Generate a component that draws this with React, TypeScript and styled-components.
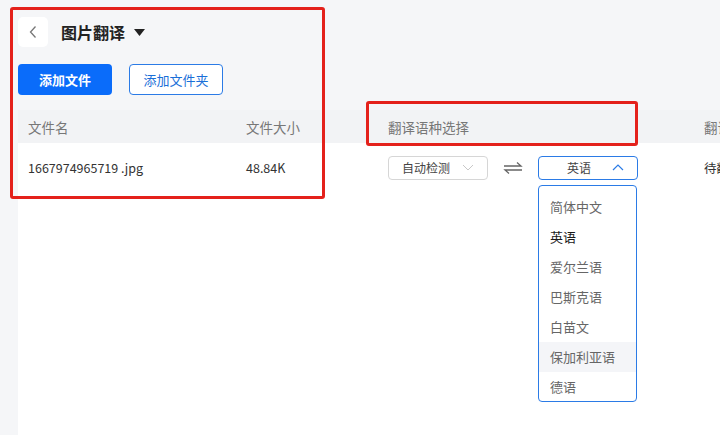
import React from 'react';
import styled, { createGlobalStyle } from 'styled-components';

const GlobalStyle = createGlobalStyle`
  html, body {
    margin: 0;
    padding: 0;
    background: #ffffff;
    font-family: "Noto Sans CJK SC", "Noto Sans", "Liberation Sans", sans-serif;
  }
`;

const languages = ['简体中文', '英语', '爱尔兰语', '巴斯克语', '白苗文', '保加利亚语', '德语'];

const App: React.FC = () => {
  return (
    <>
      <GlobalStyle />
      <Page>
        <LeftRail />
        <Main>
          <Top>
            <HeaderRow>
              <BackButton>
                <svg width="10" height="14" viewBox="0 0 10 14">
                  <path d="M7.5 1.5 L2.5 7 L7.5 12.5" fill="none" stroke="#777" strokeWidth="1.3" />
                </svg>
              </BackButton>
              <Title>图片翻译</Title>
              <Caret>
                <svg width="11" height="7" viewBox="0 0 11 7">
                  <path d="M0 0 H11 L5.5 7 Z" fill="#222" />
                </svg>
              </Caret>
            </HeaderRow>
            <Toolbar>
              <PrimaryButton>添加文件</PrimaryButton>
              <OutlineButton>添加文件夹</OutlineButton>
            </Toolbar>
          </Top>
          <Table>
            <HeadRow>
              <HeadCell $width={218}>文件名</HeadCell>
              <HeadCell $width={142}>文件大小</HeadCell>
              <HeadCell $width={316}>翻译语种选择</HeadCell>
              <HeadCell>翻译状态</HeadCell>
            </HeadRow>
            <BodyRow>
              <Cell $width={218}>1667974965719 .jpg</Cell>
              <Cell $width={142}>48.84K</Cell>
              <Cell $width={316}>
                <Select>
                  <SelectLabel>自动检测</SelectLabel>
                  <svg width="12" height="7" viewBox="0 0 12 7">
                    <path d="M1 1 L6 6 L11 1" fill="none" stroke="#c8c8c8" strokeWidth="1" />
                  </svg>
                </Select>
                <Swap>
                  <svg width="20" height="12" viewBox="0 0 20 12">
                    <path d="M1 4 H18 L14 0.5" fill="none" stroke="#666" strokeWidth="1.3" />
                    <path d="M19 8 H2 L6 11.5" fill="none" stroke="#666" strokeWidth="1.3" />
                  </svg>
                </Swap>
                <SelectWrap>
                  <Select $open>
                    <SelectLabel $center>英语</SelectLabel>
                    <svg width="12" height="7" viewBox="0 0 12 7">
                      <path d="M1 6 L6 1 L11 6" fill="none" stroke="#2b7be6" strokeWidth="1.2" />
                    </svg>
                  </Select>
                  <Menu>
                    {languages.map((lang) => (
                      <MenuItem key={lang} $active={lang === '保加利亚语'} $selected={lang === '英语'}>
                        {lang}
                      </MenuItem>
                    ))}
                  </Menu>
                </SelectWrap>
              </Cell>
              <Cell>待翻译</Cell>
            </BodyRow>
          </Table>
        </Main>
        <Annotation style={{ left: 10, top: 7, width: 315, height: 192 }} />
        <Annotation style={{ left: 366, top: 101, width: 272, height: 45 }} />
      </Page>
    </>
  );
};

const Page = styled.div`
  position: relative;
  display: flex;
  width: 720px;
  height: 435px;
  overflow: hidden;
  background: #ffffff;
`;

const LeftRail = styled.div`
  width: 18px;
  flex-shrink: 0;
  background: #f5f6f8;
`;

const Main = styled.div`
  flex: 1;
  display: flex;
  flex-direction: column;
  min-width: 0;
`;

const Top = styled.div`
  background: #f5f6f8;
  padding: 17px 0 15px;
  display: flex;
  flex-direction: column;
  gap: 17px;
`;

const HeaderRow = styled.div`
  display: flex;
  align-items: center;
  height: 30px;
`;

const BackButton = styled.div`
  width: 30px;
  height: 30px;
  border-radius: 5px;
  background: #ffffff;
  display: flex;
  align-items: center;
  justify-content: center;
`;

const Title = styled.div`
  margin-left: 13px;
  font-size: 16px;
  font-weight: 700;
  color: #222;
`;

const Caret = styled.div`
  margin-left: 9px;
  display: flex;
  align-items: center;
`;

const Toolbar = styled.div`
  display: flex;
  gap: 17px;
`;

const PrimaryButton = styled.div`
  width: 94px;
  height: 31px;
  border-radius: 4px;
  background: #0a6cfa;
  color: #ffffff;
  font-size: 13px;
  font-weight: 700;
  display: flex;
  align-items: center;
  justify-content: center;
  box-sizing: border-box;
`;

const OutlineButton = styled(PrimaryButton)`
  background: #ffffff;
  color: #1a6fd8;
  font-weight: 400;
  border: 1px solid #2b7be6;
`;

const Table = styled.div`
  display: flex;
  flex-direction: column;
`;

const HeadRow = styled.div`
  display: flex;
  height: 33px;
  background: #f2f3f5;
`;

const HeadCell = styled.div<{ $width?: number }>`
  ${(p) => (p.$width ? `width: ${p.$width}px; flex-shrink: 0;` : 'flex: 1;')}
  padding-left: 10px;
  box-sizing: border-box;
  display: flex;
  align-items: center;
  font-size: 13.5px;
  color: #777;
  white-space: nowrap;
  overflow: hidden;
`;

const BodyRow = styled.div`
  display: flex;
  height: 49px;
  background: #ffffff;
`;

const Cell = styled(HeadCell)`
  color: #333;
  font-size: 12.5px;
  overflow: visible;
`;

const Select = styled.div<{ $open?: boolean }>`
  width: 100px;
  height: 24px;
  box-sizing: border-box;
  border: 1px solid ${(p) => (p.$open ? '#2b7be6' : '#d6d6d6')};
  border-radius: 4px;
  background: #fff;
  display: flex;
  align-items: center;
  padding: 0 13px 0 13px;
  gap: 6px;
`;

const SelectLabel = styled.span<{ $center?: boolean }>`
  flex: 1;
  font-size: 12px;
  color: #444;
  text-align: ${(p) => (p.$center ? 'center' : 'left')};
`;

const Swap = styled.div`
  width: 50px;
  display: flex;
  justify-content: center;
  align-items: center;
`;

const SelectWrap = styled.div`
  position: relative;
`;

const Menu = styled.div`
  position: absolute;
  left: 0;
  top: 29px;
  width: 99px;
  height: 217px;
  box-sizing: border-box;
  border: 1px solid #2b7be6;
  border-radius: 4px;
  background: #fff;
  padding-top: 6px;
  display: flex;
  flex-direction: column;
  z-index: 2;
`;

const MenuItem = styled.div<{ $active?: boolean; $selected?: boolean }>`
  height: 30px;
  flex-shrink: 0;
  display: flex;
  align-items: center;
  padding-left: 11px;
  font-size: 13px;
  color: ${(p) => (p.$selected ? '#1a1a1a' : '#666')};
  background: ${(p) => (p.$active ? '#f4f5f8' : 'transparent')};
`;

const Annotation = styled.div`
  position: absolute;
  box-sizing: border-box;
  border: 3px solid #e4211b;
  border-radius: 3px;
  pointer-events: none;
  z-index: 3;
`;

export default App;
